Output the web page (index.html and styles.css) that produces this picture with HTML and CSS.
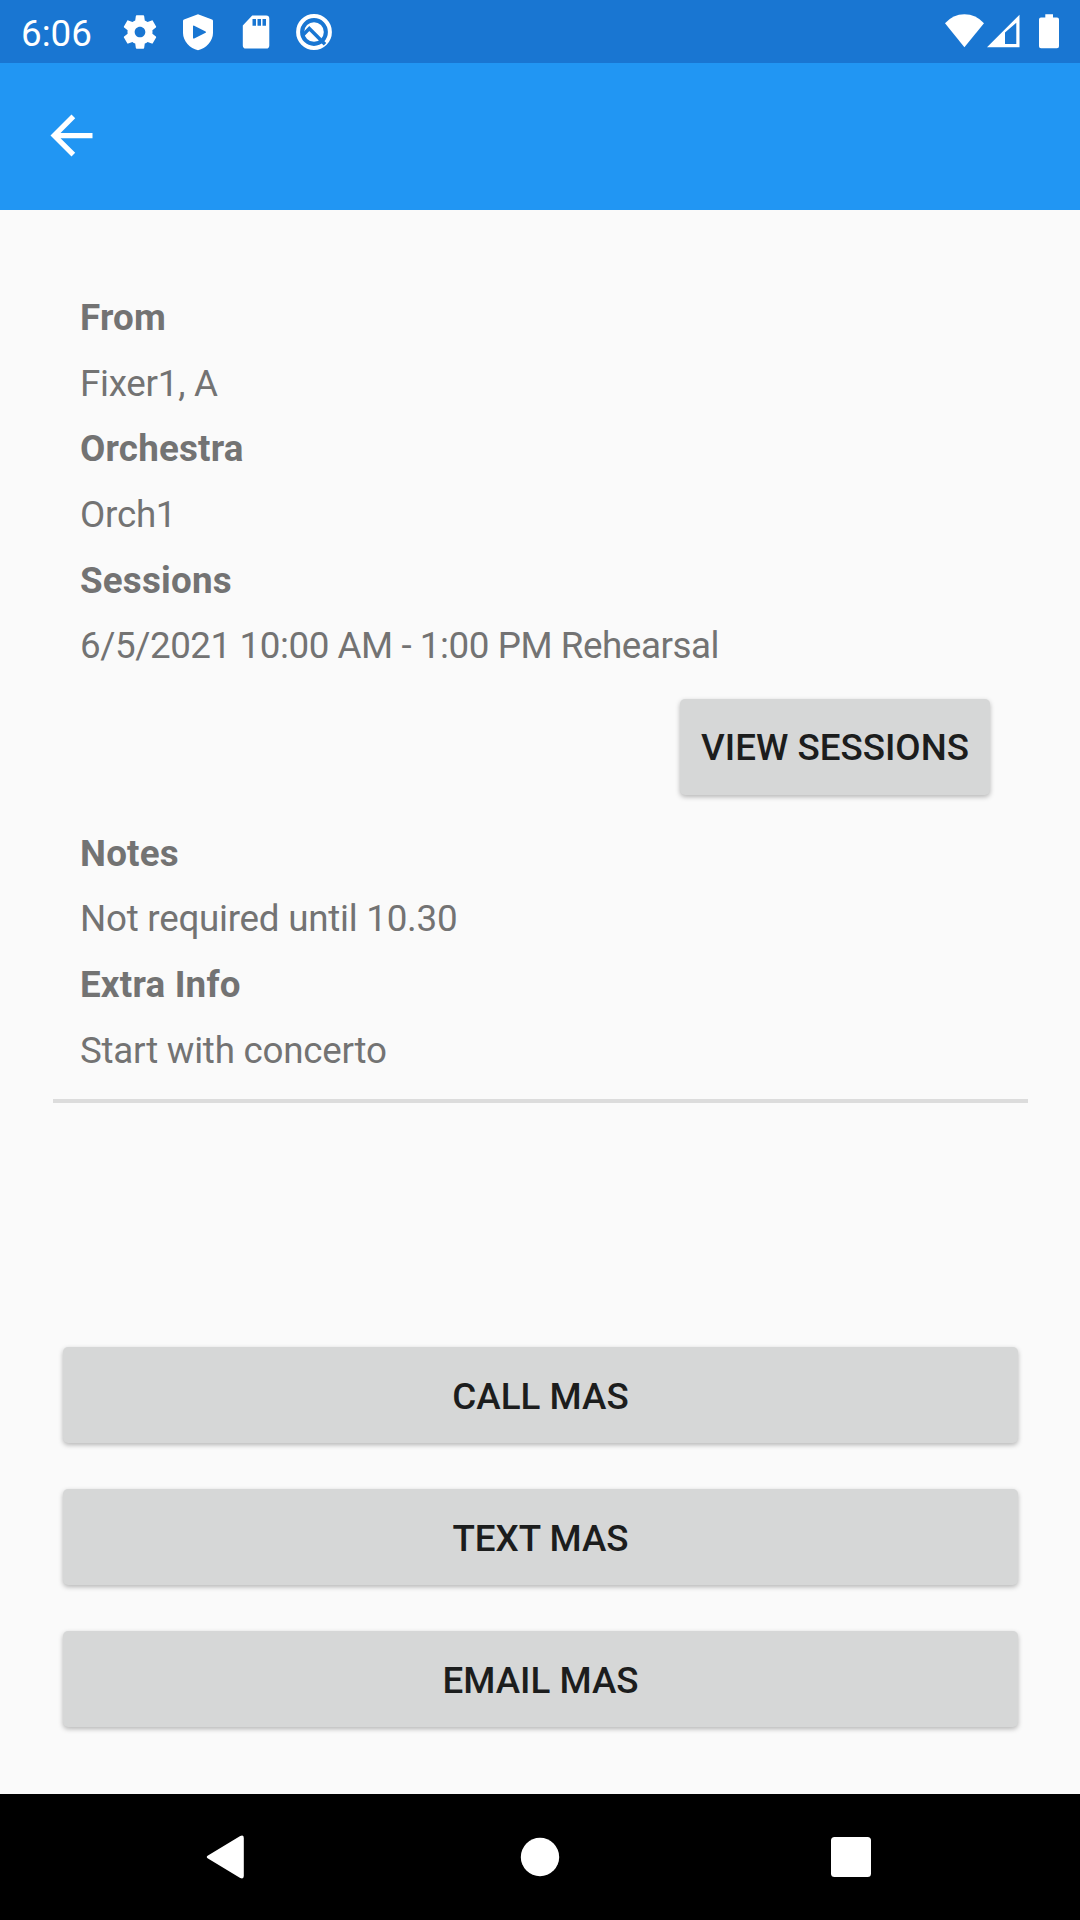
FILE: index.html
```html
<!DOCTYPE html>
<html lang="en">
<head>
    <meta charset="UTF-8">
    <meta name="viewport" content="width=device-width, initial-scale=1.0">
    <title>Booking Details</title>
    <link rel="stylesheet" href="styles.css">
</head>
<body>
    <div class="status-bar">
        <span class="clock">6:06</span>
        <div class="status-left">
            <!-- Settings -->
            <svg width="40" height="40" viewBox="0 0 24 24"><path d="M19.43 12.98c.04-.32.07-.64.07-.98s-.03-.66-.07-.98l2.11-1.65c.19-.15.24-.42.12-.64l-2-3.46c-.12-.22-.39-.3-.61-.22l-2.49 1c-.52-.4-1.08-.73-1.69-.98l-.38-2.65C14.46 2.18 14.25 2 14 2h-4c-.25 0-.46.18-.49.42l-.38 2.65c-.61.25-1.17.59-1.69.98l-2.49-1c-.23-.09-.49 0-.61.22l-2 3.46c-.13.22-.07.49.12.64l2.11 1.65c-.04.32-.07.65-.07.98s.03.66.07.98l-2.11 1.65c-.19.15-.24.42-.12.64l2 3.46c.12.22.39.3.61.22l2.49-1c.52.4 1.08.73 1.69.98l.38 2.65c.03.24.24.42.49.42h4c.25 0 .46-.18.49-.42l.38-2.65c.61-.25 1.17-.59 1.69-.98l2.49 1c.23.09.49 0 .61-.22l2-3.46c.12-.22.07-.49-.12-.64l-2.11-1.65zM12 15.2c-1.77 0-3.2-1.43-3.2-3.2s1.43-3.2 3.2-3.2 3.2 1.43 3.2 3.2-1.43 3.2-3.2 3.2z"/></svg>
            <!-- Play Protect -->
            <svg width="40" height="40" viewBox="0 0 40 40"><path fill-rule="evenodd" d="M20 2.3L34 7.4Q35 7.8 35 9V21C35 29 28 36.5 20 38.3C12 36.5 5 29 5 21V9Q5 7.8 6 7.4ZM15 14.5V25.7Q15 27 16.2 26.4L27.6 20.7Q28.6 20 27.6 19.4L16.2 13.8Q15 13.2 15 14.5Z"/></svg>
            <!-- SD card -->
            <svg width="40" height="40" viewBox="0 0 40 40"><path fill-rule="evenodd" d="M16.2 3.5H30.2Q33.3 3.5 33.3 6.7V33.4Q33.3 36.5 30.2 36.5H10Q6.8 36.5 6.8 33.4V13.4ZM16.5 7V13.7H20V7ZM21.5 7V13.7H25V7ZM26.5 7V13.7H30V7Z"/></svg>
            <!-- Android 10 -->
            <svg width="40" height="40" viewBox="0 0 40 40"><circle class="ring" cx="20" cy="20" r="15.9"/><circle cx="20" cy="20" r="9.8"/><path class="cut" d="M9 23L15.3 16.5L31 32.2"/></svg>
        </div>
        <div class="status-right">
            <svg width="39" height="40" viewBox="0 0 39 40"><path d="M0 11.3Q8 2.3 19.4 2.3Q31 2.3 39 11.3L19.4 35.3Z"/></svg>
            <svg class="signal" width="33" height="40" viewBox="0 0 33 40"><path fill-rule="evenodd" d="M0 35.3L32.5 2.7V35.3ZM18 20.5V32H29.3V10.8Z"/></svg>
            <svg class="battery" width="20" height="40" viewBox="0 0 20 40"><path d="M6.3 2.3H14V5.5H18Q20 5.5 20 7.5V34.3Q20 36.3 18 36.3H2Q0 36.3 0 34.3V7.5Q0 5.5 2 5.5H6.3Z"/></svg>
        </div>
    </div>
    <header>
        <svg width="63" height="63" viewBox="0 0 24 24"><path d="M20 11H7.83l5.59-5.59L12 4l-8 8 8 8 1.41-1.41L7.83 13H20v-2z"/></svg>
    </header>
    <main>
        <section class="details">
            <h2>From</h2>
            <p>Fixer1, A</p>
            <h2>Orchestra</h2>
            <p>Orch1</p>
            <h2>Sessions</h2>
            <p class="session">6/5/2021 10:00 AM - 1:00 PM Rehearsal</p>
            <button class="btn view-btn">View Sessions</button>
            <h2>Notes</h2>
            <p>Not required until 10.30</p>
            <h2>Extra Info</h2>
            <p>Start with concerto</p>
        </section>
        <hr class="divider">
        <section class="actions">
            <button class="btn">Call MAS</button>
            <button class="btn">Text MAS</button>
            <button class="btn">Email MAS</button>
        </section>
    </main>
    <footer>
        <svg width="44" height="44" viewBox="0 0 44 44"><path d="M5.8 20L36.8 1.2Q40.8-.8 40.8 3V41Q40.8 44.8 36.8 42.8L5.8 24Q1.6 22 5.8 20Z"/></svg>
        <svg width="44" height="44" viewBox="0 0 44 44"><circle cx="24" cy="22" r="19.2"/></svg>
        <svg width="44" height="44" viewBox="0 0 44 44"><rect x="2" y="2" width="40" height="40" rx="3.5"/></svg>
    </footer>
</body>
</html>
```

FILE: styles.css
```css
/* General Styles */
* {
    box-sizing: border-box;
}

body {
    font-family: Roboto, sans-serif;
    font-size: 36.75px;
    margin: 0;
    height: 1920px;
    display: flex;
    flex-direction: column;
    background-color: #fafafa;
    color: #737373;
}

svg {
    display: block;
    fill: white;
    flex-shrink: 0;
}

/* Status bar */
.status-bar {
    display: flex;
    align-items: center;
    height: 63px;
    padding: 0 21px;
    background-color: #1976d2;
    color: white;
}

.clock {
    width: 99px;
    padding-top: 3px;
}

.status-left {
    display: flex;
    gap: 18px;
}

.status-right {
    display: flex;
    margin-left: auto;
}

.signal {
    margin-left: 3px;
}

.battery {
    margin-left: 19px;
}

.ring {
    fill: none;
    stroke: white;
    stroke-width: 4;
}

.cut {
    fill: none;
    stroke: #1976d2;
    stroke-width: 3.5;
}

/* App bar */
header {
    display: flex;
    align-items: center;
    height: 147px;
    padding: 0 0 2px 40px;
    background-color: #2196f3;
}

main {
    flex: 1;
    display: flex;
    flex-direction: column;
    padding: 75px 52px 67px 53px;
}

.details {
    display: flex;
    flex-direction: column;
    padding: 0 27px;
}

.details h2,
.details p {
    margin: 0;
    font-size: 36.75px;
    line-height: 65.625px;
}

.details h2 {
    letter-spacing: 0.2px;
}

.details p {
    letter-spacing: -0.25px;
}

.details .session {
    letter-spacing: -0.43px;
}

.divider {
    width: 100%;
    height: 4px;
    margin: 16px 0 0;
    border: none;
    background-color: #dcdcdc;
}

/* Buttons */
.btn {
    height: 96px;
    padding: 2px 0 0;
    border: none;
    border-radius: 5px;
    background-color: #d6d7d7;
    box-shadow: 0 2px 5px rgba(0, 0, 0, 0.28);
    color: #1c1d1d;
    font-family: inherit;
    font-size: 36.75px;
    font-weight: 500;
    text-transform: uppercase;
}

.view-btn {
    align-self: flex-end;
    width: 310px;
    margin: 20px 11px 26px 0;
}

.actions {
    display: flex;
    flex-direction: column;
    gap: 46px;
    margin-top: auto;
    padding: 0 10px;
}

/* Navigation bar */
footer {
    display: flex;
    justify-content: space-between;
    align-items: center;
    height: 126px;
    padding: 0 207px 0 203px;
    background-color: black;
}
```
